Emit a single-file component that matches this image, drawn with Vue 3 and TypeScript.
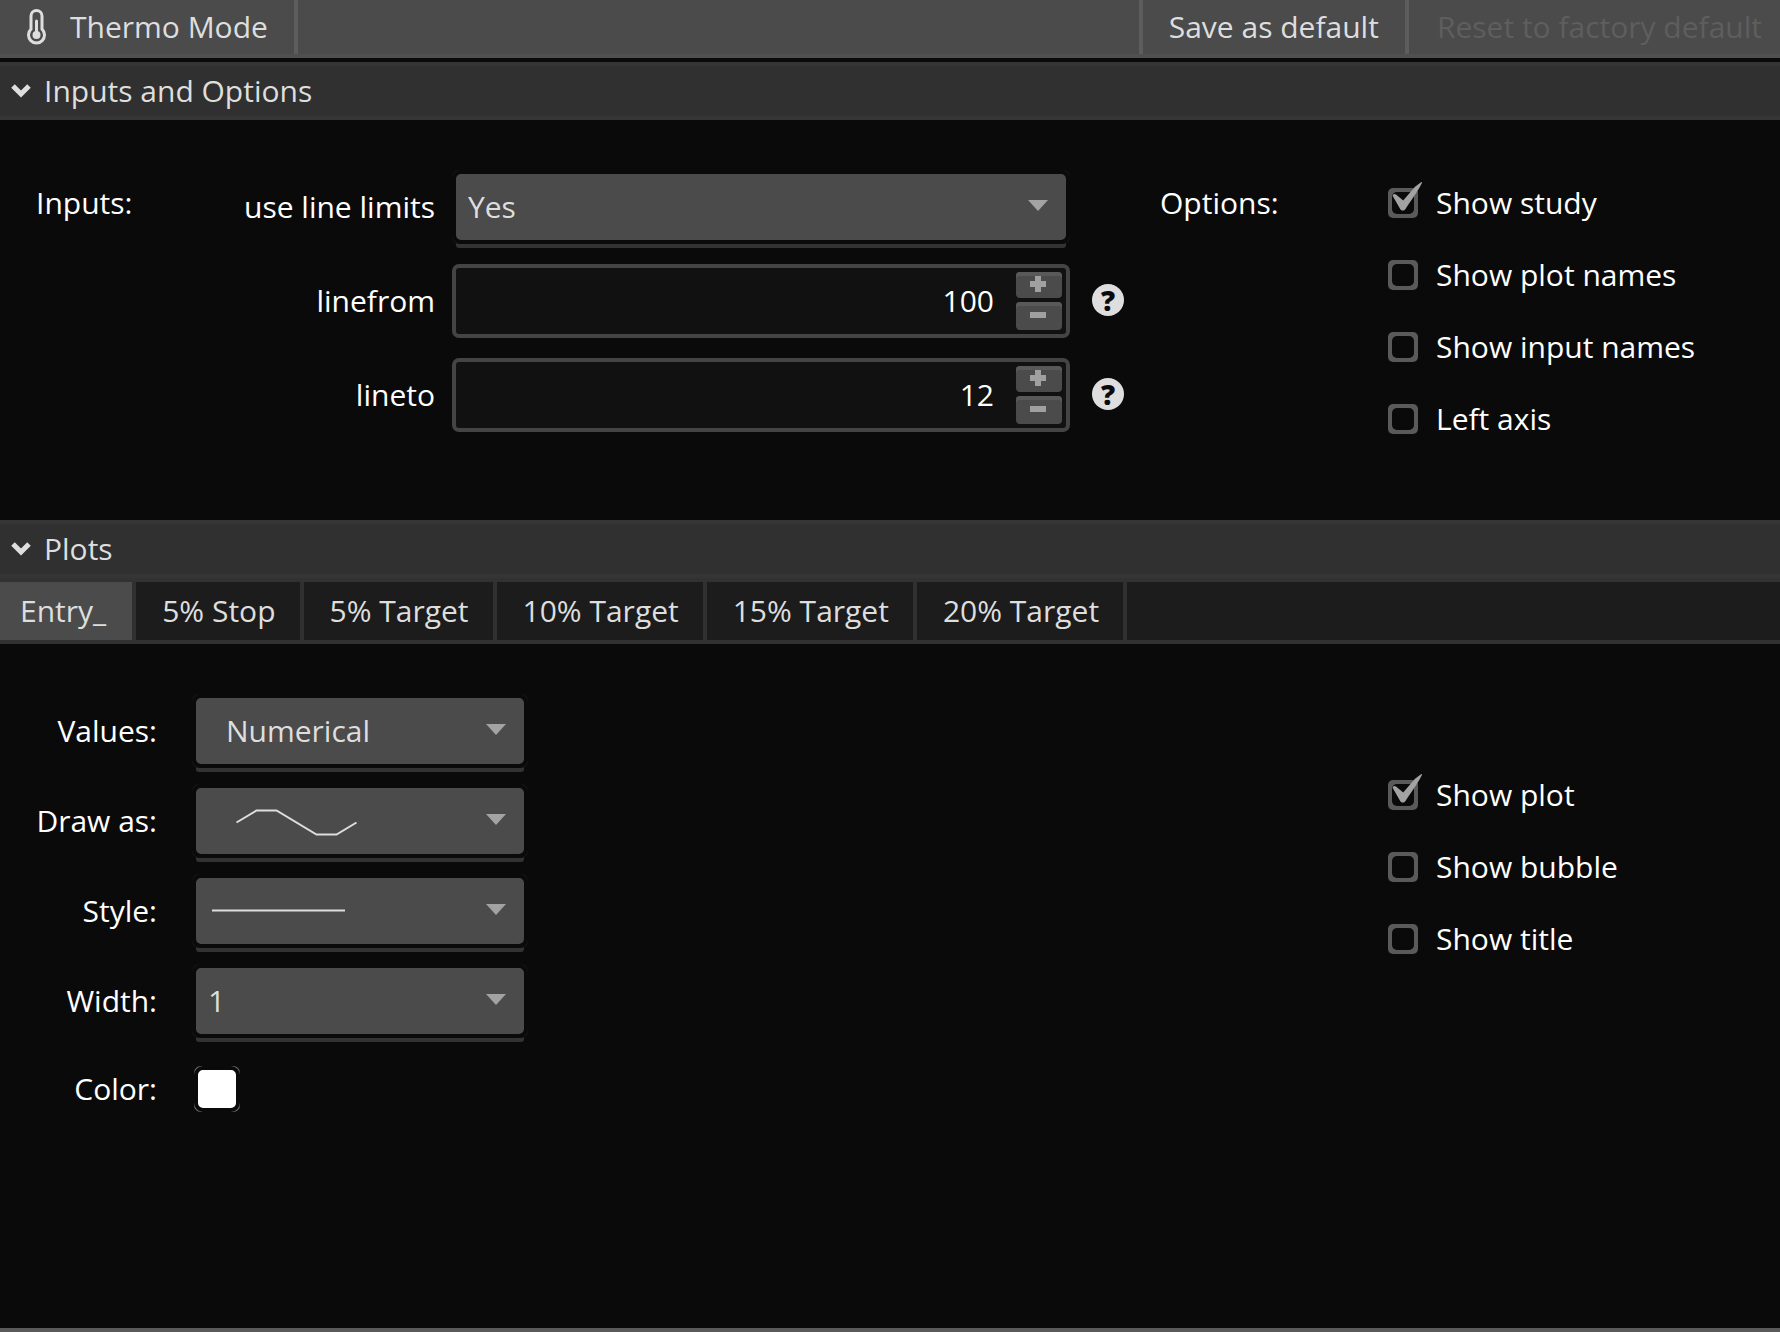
<script setup lang="ts">
import { ref } from 'vue'

interface Check {
  id: string
  label: string
  on: boolean
}
interface NumberField {
  id: string
  label: string
  value: number
}

const lineLimits = ref('Yes')
const numbers = ref<NumberField[]>([
  { id: 'linefrom', label: 'linefrom', value: 100 },
  { id: 'lineto', label: 'lineto', value: 12 },
])
const options = ref<Check[]>([
  { id: 'show-study', label: 'Show study', on: true },
  { id: 'show-plot-names', label: 'Show plot names', on: false },
  { id: 'show-input-names', label: 'Show input names', on: false },
  { id: 'left-axis', label: 'Left axis', on: false },
])
const plotOptions = ref<Check[]>([
  { id: 'show-plot', label: 'Show plot', on: true },
  { id: 'show-bubble', label: 'Show bubble', on: false },
  { id: 'show-title', label: 'Show title', on: false },
])
const tabs = ['Entry_', '5% Stop', '5% Target', '10% Target', '15% Target', '20% Target']
const activeTab = ref('Entry_')
const values = ref('Numerical')
const drawAs = ref('line')
const lineStyle = ref('solid')
const lineWidth = ref('1')
</script>

<template>
  <main class="panel">
    <header class="topbar">
      <div class="title">
        <svg class="thermo" viewBox="0 0 20 36" aria-hidden="true">
          <path d="M4 20.2V7a5.5 5.5 0 0 1 11 0v13.2a8 8 0 1 1-11 0z" />
          <path d="M9.500 12v14" />
          <circle cx="9.500" cy="26" r="4" />
        </svg>
        <span>Thermo Mode</span>
      </div>
      <button type="button" class="top-button">Save as default</button>
      <button type="button" class="top-button reset" disabled>Reset to factory default</button>
    </header>

    <h2 class="section-head">
      <svg class="chevron" viewBox="0 0 20 14" aria-hidden="true"><path d="M2 2l8 8 8-8" /></svg>
      Inputs and Options
    </h2>
    <section class="inputs">
      <div class="legend">Inputs:</div>
      <div class="fields">
        <div class="input-row">
          <label for="limits">use line limits</label>
          <div class="combo">
            <select id="limits" v-model="lineLimits">
              <option>Yes</option>
              <option>No</option>
            </select>
            <svg class="arrow" viewBox="0 0 20 11" aria-hidden="true"><path d="M0 0h20L10 11z" /></svg>
          </div>
        </div>
        <div v-for="n in numbers" :key="n.id" class="input-row">
          <label :for="n.id">{{ n.label }}</label>
          <div class="spinner">
            <input :id="n.id" v-model.number="n.value" type="text" inputmode="numeric" />
            <div class="steps">
              <button type="button" aria-label="Increase" @click="n.value++">
                <svg viewBox="0 0 16 16" aria-hidden="true"><path d="M5 0h6v5h5v6h-5v5H5v-5H0V5h5z" /></svg>
              </button>
              <button type="button" aria-label="Decrease" @click="n.value--">
                <svg viewBox="0 0 16 16" aria-hidden="true"><path d="M0 5h16v6H0z" /></svg>
              </button>
            </div>
          </div>
          <button type="button" class="help">?</button>
        </div>
      </div>
      <div class="legend options">Options:</div>
      <div class="checks">
        <label v-for="c in options" :key="c.id" :for="c.id" class="check">
          <input :id="c.id" v-model="c.on" type="checkbox" />
          <svg v-if="c.on" class="tick" viewBox="0 0 36 36" aria-hidden="true">
            <path d="M5 14.500c-.8-2 1.200-3.500 3-2l7.200 6L27 4.800 33 .2c.8-.4 1.200.2.9.9C29 11 22 20 17.500 27c-1.500 2-4 2-5.300 0z" />
          </svg>
          <span>{{ c.label }}</span>
        </label>
      </div>
    </section>

    <h2 class="section-head">
      <svg class="chevron" viewBox="0 0 20 14" aria-hidden="true"><path d="M2 2l8 8 8-8" /></svg>
      Plots
    </h2>
    <nav class="tabs" role="tablist">
      <button
        v-for="t in tabs"
        :key="t"
        type="button"
        role="tab"
        :aria-selected="t === activeTab"
        :class="{ active: t === activeTab }"
        @click="activeTab = t"
      >
        {{ t }}
      </button>
    </nav>
    <section class="plots">
      <div class="plot-fields">
        <div class="plot-row">
          <label for="values">Values:</label>
          <div class="combo">
            <select id="values" v-model="values" class="indented">
              <option>Numerical</option>
              <option>Boolean</option>
            </select>
            <svg class="arrow" viewBox="0 0 20 11" aria-hidden="true"><path d="M0 0h20L10 11z" /></svg>
          </div>
        </div>
        <div class="plot-row">
          <label for="draw">Draw as:</label>
          <div class="combo">
            <select id="draw" v-model="drawAs">
              <option value="line" aria-label="Line"></option>
            </select>
            <svg class="sample" viewBox="0 0 168 66" aria-hidden="true">
              <path d="M44.500 34.500L64.500 22.500H84.500L124.500 46.500H144.500L164.500 34.500" />
            </svg>
            <svg class="arrow" viewBox="0 0 20 11" aria-hidden="true"><path d="M0 0h20L10 11z" /></svg>
          </div>
        </div>
        <div class="plot-row">
          <label for="style">Style:</label>
          <div class="combo">
            <select id="style" v-model="lineStyle">
              <option value="solid" aria-label="Solid"></option>
            </select>
            <svg class="sample" viewBox="0 0 168 66" aria-hidden="true"><path d="M20 32.500H153" /></svg>
            <svg class="arrow" viewBox="0 0 20 11" aria-hidden="true"><path d="M0 0h20L10 11z" /></svg>
          </div>
        </div>
        <div class="plot-row">
          <label for="width">Width:</label>
          <div class="combo">
            <select id="width" v-model="lineWidth">
              <option>1</option>
              <option>2</option>
              <option>3</option>
            </select>
            <svg class="arrow" viewBox="0 0 20 11" aria-hidden="true"><path d="M0 0h20L10 11z" /></svg>
          </div>
        </div>
        <div class="plot-row color-row">
          <label for="color">Color:</label>
          <div class="swatch"><button id="color" type="button"></button></div>
        </div>
      </div>
      <div class="checks plot-checks">
        <label v-for="c in plotOptions" :key="c.id" :for="c.id" class="check">
          <input :id="c.id" v-model="c.on" type="checkbox" />
          <svg v-if="c.on" class="tick" viewBox="0 0 36 36" aria-hidden="true">
            <path d="M5 14.500c-.8-2 1.200-3.500 3-2l7.200 6L27 4.800 33 .2c.8-.4 1.200.2.9.9C29 11 22 20 17.500 27c-1.500 2-4 2-5.300 0z" />
          </svg>
          <span>{{ c.label }}</span>
        </label>
      </div>
    </section>
  </main>
</template>

<style>
body {
  margin: 0;
  background: #0a0a0a;
}
</style>

<style scoped>
.panel,
.panel * {
  box-sizing: border-box;
}
.panel {
  display: flex;
  flex-direction: column;
  min-height: 100vh;
  border-bottom: 4px solid #5a5a5a;
  background: #0a0a0a;
  color: #fff;
  font: 30px/40px "Open Sans", "Noto Sans", sans-serif;
}
button,
input,
select {
  margin: 0;
  padding: 0;
  border: 0;
  font: inherit;
  color: inherit;
  appearance: none;
}
svg {
  display: block;
  flex: none;
}

/* top bar */
.topbar {
  display: flex;
  height: 58px;
  margin-bottom: 4px;
  border-bottom: 4px solid #505050;
  background: #4b4b4b;
  color: #dedede;
}
.title {
  display: flex;
  align-items: center;
  gap: 23px;
  margin-right: auto;
  padding: 0 26px 0 27px;
  border-right: 4px solid #5d5d5d;
}
.thermo {
  width: 20px;
  height: 36px;
  fill: none;
  stroke: #dedede;
  stroke-width: 3;
  stroke-linecap: round;
}
.thermo circle {
  fill: #dedede;
  stroke: none;
}
.top-button {
  padding: 0 26px;
  border-left: 4px solid #5d5d5d;
  background: none;
  white-space: nowrap;
}
.reset {
  padding-right: 18px;
  padding-left: 28px;
  color: #5e5e5e;
}

/* section headings */
.section-head {
  display: flex;
  align-items: center;
  gap: 13px;
  height: 58px;
  margin: 0;
  padding: 0 11px;
  border: solid #353535;
  border-width: 4px 0;
  background: #303030;
  color: #dedede;
  font-size: 30px;
  font-weight: 400;
}
.chevron {
  width: 20px;
  height: 14px;
  fill: none;
  stroke: #dedede;
  stroke-width: 5;
}

/* inputs and options */
.inputs {
  display: flex;
  align-items: flex-start;
  padding: 50px 34px 81px 36px;
}
.legend {
  width: 120px;
  padding-top: 13px;
}
.options {
  width: 228px;
}
.fields {
  display: flex;
  flex: 1;
  flex-direction: column;
  gap: 20px;
  margin-right: 36px;
}
.input-row {
  display: grid;
  grid-template-columns: 296px 1fr 54px;
  align-items: center;
  height: 74px;
}
.input-row > label {
  padding-right: 17px;
  text-align: right;
}

/* drop-downs */
.combo {
  display: grid;
  align-items: center;
  height: 74px;
  border-radius: 7px;
  background: #181818;
  box-shadow: 0 8px 0 -4px #333;
}
.combo > * {
  grid-area: 1 / 1;
}
.combo select {
  width: 100%;
  height: 74px;
  padding: 0 48px 0 12px;
  border: 4px solid #0a0a0a;
  border-radius: 9px;
  background: #4b4b4b;
  color: #dedede;
}
.combo .indented {
  padding-left: 30px;
}
.arrow {
  justify-self: end;
  width: 20px;
  height: 11px;
  margin: 0 22px 4px 0;
  fill: #a3a3a3;
  pointer-events: none;
}
.sample {
  width: 168px;
  height: 66px;
  fill: none;
  stroke: #dedede;
  stroke-width: 2;
  pointer-events: none;
}

/* number boxes */
.spinner {
  display: flex;
  height: 74px;
  padding-right: 4px;
  border: 4px solid #444;
  border-radius: 7px;
  background: #111;
}
.spinner input {
  flex: 1;
  min-width: 0;
  padding-right: 22px;
  background: none;
  text-align: right;
  outline: 0;
}
.steps {
  display: grid;
  grid-template-rows: 26px 28px;
  gap: 4px;
  width: 46px;
  padding-top: 4px;
}
.steps button {
  display: grid;
  place-items: center;
  padding: 0 2px 2px 0;
  border-radius: 4px;
  background: #4b4b4b;
  box-shadow: inset 0 4px #595959;
}
.steps svg {
  width: 16px;
  height: 16px;
  fill: #a0a0a0;
}
.help {
  justify-self: end;
  width: 32px;
  height: 32px;
  margin-bottom: 2px;
  border-radius: 50%;
  background: #dedede;
  color: #0a0a0a;
  font-size: 28px;
  font-weight: 800;
  line-height: 32px;
}

/* tick boxes */
.checks {
  display: flex;
  flex-direction: column;
  align-items: flex-start;
  gap: 32px;
  width: 358px;
  padding-top: 13px;
}
.check {
  position: relative;
  display: flex;
  align-items: center;
  gap: 18px;
}
.check input {
  width: 30px;
  height: 30px;
  padding: 4px;
  border-radius: 5px;
  background: #5a5a5a;
}
.check input::before {
  content: "";
  display: block;
  width: 22px;
  height: 22px;
  border-radius: 5px;
  background: #0a0a0a;
}
.tick {
  position: absolute;
  top: -1px;
  left: 0;
  width: 36px;
  height: 36px;
  fill: #a3a3a3;
  pointer-events: none;
}

/* tabs */
.tabs {
  display: flex;
  height: 66px;
  border: solid #323232;
  border-width: 4px 0;
  background: #1c1c1c;
}
.tabs button {
  padding: 0 24px 0 26px;
  border-right: 4px solid #303030;
  background: none;
  color: #dedede;
}
.tabs button:first-child {
  padding: 0 26px 0 20px;
}
.tabs .active {
  background: #4b4b4b;
}

/* plots */
.plots {
  display: flex;
  align-items: flex-start;
  justify-content: space-between;
  padding: 50px 34px;
}
.plot-fields {
  display: flex;
  flex-direction: column;
  gap: 16px;
}
.plot-row {
  display: grid;
  grid-template-columns: 123px 336px;
  gap: 35px;
  align-items: center;
  height: 74px;
}
.plot-row > label {
  text-align: right;
}
.color-row {
  height: 70px;
}
.swatch {
  width: 46px;
  height: 46px;
  margin-left: 2px;
  border-radius: 7px;
  background: #777;
}
.swatch button {
  display: block;
  width: 46px;
  height: 46px;
  border: 4px solid #0a0a0a;
  border-radius: 9px;
  background: #fff;
}
.plot-checks {
  padding-top: 81px;
}
</style>
